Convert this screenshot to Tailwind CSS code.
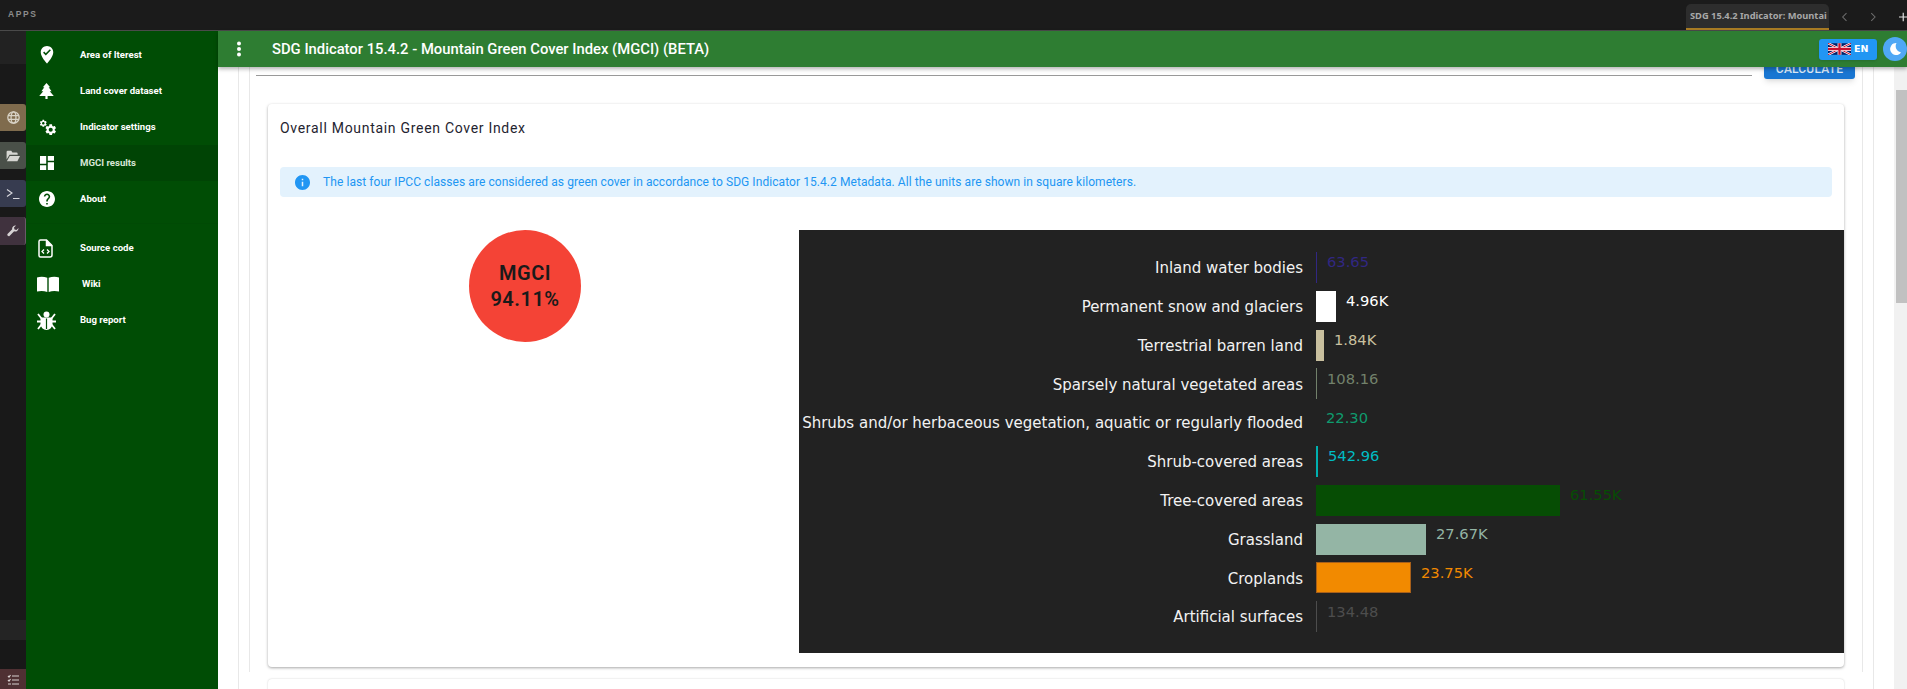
<!DOCTYPE html>
<html lang="en">
<head>
<meta charset="utf-8">
<title>SDG 15.4.2 Indicator: Mountain Green Cover Index</title>
<script src="https://cdn.jsdelivr.net/npm/@tailwindcss/browser@4"></script>
</head>
<body class="h-[689px] w-[1907px] overflow-hidden bg-white font-['Roboto',sans-serif]">
  <!-- Workspace top bar -->
  <div class="flex h-[31px] items-start justify-between border-b border-[#4a4a4a] bg-[#1b1b1b]">
    <span class="ml-[8px] mt-[9px] text-[8.5px] leading-[10px] font-bold tracking-[1.6px] text-[#8c8c8c] font-['Liberation_Sans',sans-serif]">APPS</span>
    <div class="flex h-full items-end">
      <div class="flex h-[26px] w-[143px] items-center rounded-t-[5px] border-b-2 border-[#a87c24] bg-[#2d2d2d] pl-[4px] pr-[7px]">
        <span class="whitespace-nowrap text-[9.3px] font-bold text-[#a8a8a8] font-['Noto_Sans',sans-serif]">SDG 15.4.2 Indicator: Mountai</span>
        <svg class="ml-auto" width="8" height="8" viewBox="0 0 8 8" fill="none" stroke="#c8c8c8" stroke-width="1.2"><path d="M1.5 1.5l5 5M6.5 1.5l-5 5"/></svg>
      </div>
      <div class="flex h-[26px] w-[78px] items-center pl-[12px]">
        <svg width="8" height="12" viewBox="0 0 8 12" fill="none" stroke="#6e6e6e" stroke-width="1.2"><path d="M6.5 1.5L2 6l4.5 4.5"/></svg>
        <svg class="ml-[22px]" width="8" height="12" viewBox="0 0 8 12" fill="none" stroke="#6e6e6e" stroke-width="1.2"><path d="M1.5 1.5L6 6l-4.5 4.5"/></svg>
        <svg class="ml-[22px]" width="10" height="10" viewBox="0 0 10 10" fill="none" stroke="#e0e0e0" stroke-width="1.4"><path d="M5 0v10M0 5h10"/></svg>
      </div>
    </div>
  </div>

  <div class="flex h-[658px]">
    <!-- Dock strip -->
    <div class="flex h-full w-[26px] shrink-0 flex-col bg-[#191919]">
      <div class="h-[33px] bg-[#222222]"></div>
      <div class="mt-[40px] flex h-[27px] items-center justify-center rounded-r-[3px] bg-[#7f6b4d]">
        <svg width="13" height="13" viewBox="0 0 24 24" fill="none" stroke="#d8d2c6" stroke-width="2.4"><circle cx="12" cy="12" r="10.5"/><ellipse cx="12" cy="12" rx="4.5" ry="10.5"/><path d="M2 8.5h20M2 15.5h20"/></svg>
      </div>
      <div class="mt-[11px] flex h-[27px] items-center justify-center rounded-r-[3px] bg-[#4a5049]">
        <svg width="14" height="12" viewBox="0 0 24 20" fill="#d6d6d2"><path d="M1 3a2 2 0 0 1 2-2h6l2 3h7a2 2 0 0 1 2 2v2H6L1 16V3z"/><path d="M6.5 10H24l-4.500 9H1.500z"/></svg>
      </div>
      <div class="mt-[11px] flex h-[27px] items-center justify-center rounded-r-[3px] bg-[#373c50]">
        <svg width="14" height="12" viewBox="0 0 14 12" fill="none" stroke="#d8d8de" stroke-width="1.1"><path d="M1 1.500L6 5 1 8.500M7 10.500h6.500"/></svg>
      </div>
      <div class="mt-[10px] flex h-[28px] items-center justify-center rounded-r-[3px] border-r border-[#6a5a68] bg-[#40323e]">
        <svg width="12" height="12" viewBox="0 0 24 24" fill="#d6d2d4"><path d="M23 6.500a6.500 6.500 0 0 1-8.700 6.100L5 22a3 3 0 0 1-4-4l9.400-9.300A6.500 6.500 0 0 1 18 1l-4 4 1 4 4 1 4-4z"/></svg>
      </div>
      <div class="mt-auto h-[20px] bg-[#242424]"></div>
      <div class="h-[29px] bg-[#181818]"></div>
      <div class="flex h-[20px] items-center justify-center bg-[#4f3033]">
        <svg width="12" height="11" viewBox="0 0 12 11" fill="none" stroke="#d8d0d0" stroke-width="1.200"><path d="M1 2l1 1 1.500-2M5 2h7M1 6l1 1 1.500-2M5 6h7M5 10h7M1 10h3"/></svg>
      </div>
    </div>

    <!-- Sidebar -->
    <nav class="flex h-full w-[192px] shrink-0 flex-col bg-[#004d05] pt-[6px] text-[9.600px] font-bold text-white">
      <a class="flex h-[36px] items-center"><span class="flex w-[54px] justify-center pr-[13px]">
        <svg width="14" height="18" viewBox="4 1 16 23" fill="#fff"><path d="M12 1C7.590 1 4 4.590 4 9c0 5.570 6.960 13.340 7.260 13.670l.74.820.740-.820C13.040 22.340 20 14.570 20 9c0-4.410-3.590-8-8-8zm-1.530 12l-3.480-3.480L8.400 8.110l2.070 2.070 5.130-5.130 1.410 1.410L10.470 13z"/></svg></span>Area of Iterest</a>
      <a class="flex h-[36px] items-center"><span class="flex w-[54px] justify-center pr-[13px]">
        <svg width="15" height="16" viewBox="2 1 20 22" fill="#fff"><path d="M12 1l5 6h-2l4 5.500h-2.500L22 19h-8.500v4h-3v-4H2l5.500-6.500H5L9 7H7z"/></svg></span>Land cover dataset</a>
      <a class="flex h-[36px] items-center"><span class="flex w-[54px] justify-center pr-[11px]">
        <svg width="18" height="17" viewBox="0 0 18 17" fill="#fff"><path transform="scale(.36)" d="M19.140 12.940c.040-.300.060-.610.060-.940 0-.320-.020-.640-.070-.940l2.030-1.580a.490.490 0 0 0 .120-.610l-1.920-3.320a.488.488 0 0 0-.590-.220l-2.390.960c-.500-.380-1.030-.700-1.620-.940l-.360-2.540a.484.484 0 0 0-.480-.410h-3.840c-.240 0-.430.170-.470.410l-.360 2.540c-.590.240-1.130.570-1.620.940l-2.390-.960c-.220-.080-.470 0-.590.220L2.740 8.870c-.120.210-.080.470.120.610l2.030 1.580c-.050.300-.090.630-.090.940s.020.640.070.940l-2.030 1.580a.490.490 0 0 0-.120.610l1.920 3.320c.120.220.370.290.590.220l2.390-.960c.500.380 1.030.700 1.620.940l.360 2.540c.050.240.240.410.480.410h3.840c.240 0 .440-.170.470-.410l.360-2.540c.590-.240 1.130-.560 1.620-.940l2.390.960c.220.080.470 0 .590-.220l1.920-3.320c.120-.220.070-.470-.120-.610l-2.010-1.580zM12 15.600c-1.980 0-3.600-1.620-3.600-3.600s1.620-3.600 3.600-3.600 3.600 1.620 3.600 3.600-1.620 3.600-3.600 3.600z"/><path transform="translate(5 4) scale(.56)" d="M19.140 12.940c.040-.300.060-.610.060-.940 0-.320-.020-.640-.070-.940l2.030-1.580a.490.490 0 0 0 .120-.610l-1.920-3.320a.488.488 0 0 0-.590-.220l-2.390.960c-.500-.380-1.030-.700-1.620-.940l-.360-2.540a.484.484 0 0 0-.480-.410h-3.840c-.240 0-.430.170-.470.410l-.360 2.540c-.590.240-1.130.570-1.620.940l-2.390-.960c-.220-.080-.470 0-.590.220L2.740 8.870c-.120.210-.080.470.120.610l2.030 1.580c-.050.300-.090.630-.090.940s.020.640.070.940l-2.030 1.580a.490.490 0 0 0-.120.610l1.920 3.320c.120.220.370.290.590.220l2.390-.960c.500.380 1.030.700 1.620.940l.360 2.540c.050.240.240.410.480.410h3.840c.240 0 .440-.170.470-.410l.360-2.540c.590-.240 1.130-.560 1.620-.940l2.390.960c.220.080.470 0 .590-.220l1.920-3.320c.120-.220.070-.470-.120-.610l-2.010-1.580zM12 15.600c-1.980 0-3.600-1.620-3.600-3.600s1.620-3.600 3.600-3.600 3.600 1.620 3.600 3.600-1.620 3.600-3.600 3.600z"/></svg></span>Indicator settings</a>
      <a class="flex h-[36px] items-center bg-[#004405] text-[#d8e6d8]"><span class="flex w-[54px] justify-center pr-[12px]">
        <svg width="14" height="14" viewBox="3 3 18 18" fill="#fff"><path d="M3 13h8V3H3v10zm0 8h8v-6H3v6zm10 0h8V11h-8v10zm0-18v6h8V3h-8z"/></svg></span>MGCI results</a>
      <a class="flex h-[36px] items-center"><span class="flex w-[54px] justify-center pr-[13px]">
        <svg width="16" height="16" viewBox="2 2 20 20" fill="#fff"><path d="M12 2C6.480 2 2 6.480 2 12s4.480 10 10 10 10-4.480 10-10S17.520 2 12 2zm1 17h-2v-2h2v2zm2.070-7.750l-.900.920C13.450 12.900 13 13.500 13 15h-2v-.500c0-1.100.450-2.100 1.170-2.830l1.240-1.260c.370-.360.590-.860.590-1.410 0-1.100-.900-2-2-2s-2 .900-2 2H8c0-2.210 1.790-4 4-4s4 1.790 4 4c0 .880-.360 1.680-.930 2.250z"/></svg></span>About</a>
      <div class="mt-[6px] mb-[6px] h-px bg-[#004a05]"></div>
      <a class="flex h-[36px] items-center"><span class="flex w-[54px] justify-center pr-[16px]">
        <svg width="15" height="19" viewBox="0 0 15 19" fill="none" stroke="#fff" stroke-width="1.500"><path d="M2.500 1h6l5.500 5.500v9.500a2 2 0 0 1-2 2h-9.500a1.500 1.500 0 0 1-1.500-1.500v-14a1.500 1.500 0 0 1 1.500-1.500z"/><path d="M8.500 1v5.500H14" fill="#fff"/><path d="M6 10.500L4 12.500l2 2M9 10.500l2 2-2 2" stroke-width="1.300"/></svg></span>Source code</a>
      <a class="flex h-[36px] items-center"><span class="flex w-[56px] justify-center pr-[12px]">
        <svg width="22" height="16" viewBox="0 0 22 16" fill="#fff"><path d="M0 1.500C3 .500 7 .500 10.300 1.800V16C7 14.800 3 14.800 0 15.600z"/><path d="M22 1.500C19 .500 15 .500 11.700 1.800V16C15 14.800 19 14.800 22 15.600z"/></svg></span>Wiki</a>
      <a class="flex h-[36px] items-center"><span class="flex w-[54px] justify-center pr-[13px]">
        <svg width="19" height="19" viewBox="0 0 19 19" fill="#fff"><circle cx="9.500" cy="3.500" r="3"/><path d="M4.500 6.500h10a1 1 0 0 1 1 1V13a6 6 0 0 1-12 0V7.500a1 1 0 0 1 1-1z"/><path d="M1 3l3.500 4.500M18 3l-3.500 4.500M0 10.500h4M19 10.500h-4M1 18l3.500-4.500M18 18l-3.500-4.500" stroke="#fff" stroke-width="1.800" fill="none"/><path d="M9.500 7.500v10.500" stroke="#004d05" stroke-width="1.200"/></svg></span>Bug report</a>
    </nav>

    <!-- App column -->
    <div class="flex h-full min-w-0 flex-1 flex-col">
      <header class="relative z-10 flex h-[36px] shrink-0 items-center bg-[#2e7d32] shadow-[0_2px_4px_rgba(0,0,0,0.3)]">
        <svg class="ml-[17px]" width="8" height="16" viewBox="0 0 8 16" fill="#fff"><circle cx="4" cy="2.500" r="2"/><circle cx="4" cy="8" r="2"/><circle cx="4" cy="13.500" r="2"/></svg>
        <h1 class="ml-[29px] text-[14.800px] font-medium text-white">SDG Indicator 15.4.2 - Mountain Green Cover Index (MGCI) (BETA)</h1>
        <button class="ml-auto flex h-[21px] w-[58px] items-center rounded-[3px] bg-[#2196f3] pl-[9px] shadow-sm">
          <svg width="23" height="12" viewBox="0 0 60 30"><rect width="60" height="30" fill="#012169"/><path d="M0 0l60 30M60 0L0 30" stroke="#fff" stroke-width="6"/><path d="M0 0l60 30M60 0L0 30" stroke="#c8102e" stroke-width="2.500"/><path d="M30 0v30M0 15h60" stroke="#fff" stroke-width="10"/><path d="M30 0v30M0 15h60" stroke="#c8102e" stroke-width="6"/></svg>
          <span class="ml-[3px] text-[9.500px] font-bold text-white font-['DejaVu_Sans',sans-serif]">EN</span>
        </button>
        <span class="ml-[6px] flex h-[24px] w-[24px] items-center justify-center rounded-full bg-[#4fa8f5]">
          <svg width="14" height="14" viewBox="0 0 14 14" fill="#fff"><path d="M8.500 1a6 6 0 1 0 4.500 9.500A6.500 6.500 0 0 1 8.500 1z"/></svg>
        </span>
      </header>

      <div class="flex min-h-0 flex-1">
        <!-- Scrolling content -->
        <main class="ml-[20px] mr-[20px] flex-1 overflow-hidden border-x border-[#e8e8e8] px-[10px]">
          <div class="h-full border-x border-[#e8e8e8] pl-[18px] pr-[18px]">
            <div class="-ml-[12px] -mr-[11px] -mt-[17px] flex items-start">
              <div class="mt-[24.500px] h-px flex-1 bg-[#999999]"></div>
              <button class="ml-[12px] h-[29px] w-[91px] rounded-[3px] bg-[#1976d2] pt-[9px] text-[12px] leading-[16px] font-medium tracking-[0.2px] text-[#dbe9f7] shadow-md">CALCULATE</button>
            </div>
            <section class="mt-[25px] h-[563px] w-[1576px] overflow-hidden rounded-[4px] bg-white shadow-[0_1px_3px_rgba(0,0,0,0.35)]">
              <h2 class="ml-[12px] mt-[14px] text-[14px] leading-[20px] font-normal tracking-[0.7px] text-[#1f2430]">Overall Mountain Green Cover Index</h2>
              <div class="mx-[12px] mt-[29px] flex h-[30px] items-center rounded-[4px] bg-[#e3f2fd] pl-[15px]">
                <svg width="15" height="15" viewBox="2 2 20 20" fill="#2196f3"><path d="M12 2C6.480 2 2 6.480 2 12s4.480 10 10 10 10-4.480 10-10S17.520 2 12 2zm1 15h-2v-6h2v6zm0-8h-2V7h2v2z"/></svg>
                <p class="ml-[13px] text-[12px] tracking-[0.07px] text-[#2196f3]">The last four IPCC classes are considered as green cover in accordance to SDG Indicator 15.4.2 Metadata. All the units are shown in square kilometers.</p>
              </div>
              <div class="mt-[33px] flex">
                <!-- MGCI badge -->
                <div class="flex w-[531px] shrink-0 justify-center pr-[17px]">
                  <div class="flex h-[112px] w-[112px] flex-col items-center justify-center rounded-full bg-[#f44336] text-[20px] leading-[26px] font-semibold tracking-[0.5px] text-[#1a1a1a]">
                    <span>MGCI</span><span>94.11%</span>
                  </div>
                </div>
                <!-- Land cover chart -->
                <div class="flex h-[423px] w-[1045px] flex-col gap-[7.800px] bg-[#222222] pt-[22px] font-['DejaVu_Sans',sans-serif] text-[15px]">
                  <div class="flex h-[31px] items-center"><span class="mt-[2px] w-[504px] whitespace-nowrap text-right text-[#f2f2f2]">Inland water bodies</span><span class="ml-[13px] h-full w-px bg-[#312783]"></span><span class="mb-[10px] ml-[10px] text-[14.700px] text-[#312783]">63.65</span></div>
                  <div class="flex h-[31px] items-center"><span class="mt-[2px] w-[504px] whitespace-nowrap text-right text-[#f2f2f2]">Permanent snow and glaciers</span><span class="ml-[13px] h-full w-[20px] bg-white"></span><span class="mb-[10px] ml-[10px] text-[14.700px] text-white">4.96K</span></div>
                  <div class="flex h-[31px] items-center"><span class="mt-[2px] w-[504px] whitespace-nowrap text-right text-[#f2f2f2]">Terrestrial barren land</span><span class="ml-[13px] h-full w-[8px] bg-[#c9c09f]"></span><span class="mb-[10px] ml-[10px] text-[14.700px] text-[#c9c09f]">1.84K</span></div>
                  <div class="flex h-[31px] items-center"><span class="mt-[2px] w-[504px] whitespace-nowrap text-right text-[#f2f2f2]">Sparsely natural vegetated areas</span><span class="ml-[13px] h-full w-px bg-[#72816b]"></span><span class="mb-[10px] ml-[10px] text-[14.700px] text-[#72816b]">108.16</span></div>
                  <div class="flex h-[31px] items-center"><span class="mt-[2px] w-[504px] whitespace-nowrap text-right text-[#f2f2f2]">Shrubs and/or herbaceous vegetation, aquatic or regularly flooded</span><span class="ml-[13px] h-full w-0"></span><span class="mb-[10px] ml-[10px] text-[14.700px] text-[#0f9b6e]">22.30</span></div>
                  <div class="flex h-[31px] items-center"><span class="mt-[2px] w-[504px] whitespace-nowrap text-right text-[#f2f2f2]">Shrub-covered areas</span><span class="ml-[13px] h-full w-[2px] bg-[#00b0b0]"></span><span class="mb-[10px] ml-[10px] text-[14.700px] text-[#00bcc4]">542.96</span></div>
                  <div class="flex h-[31px] items-center"><span class="mt-[2px] w-[504px] whitespace-nowrap text-right text-[#f2f2f2]">Tree-covered areas</span><span class="ml-[13px] h-full w-[244px] bg-[#064d04]"></span><span class="mb-[10px] ml-[10px] text-[14.700px] text-[#064d04]">61.55K</span></div>
                  <div class="flex h-[31px] items-center"><span class="mt-[2px] w-[504px] whitespace-nowrap text-right text-[#f2f2f2]">Grassland</span><span class="ml-[13px] h-full w-[110px] bg-[#94b5a5]"></span><span class="mb-[10px] ml-[10px] text-[14.700px] text-[#94b5a5]">27.67K</span></div>
                  <div class="flex h-[31px] items-center"><span class="mt-[2px] w-[504px] whitespace-nowrap text-right text-[#f2f2f2]">Croplands</span><span class="ml-[13px] h-full w-[95px] border border-[#a8601a] bg-[#f28a00]"></span><span class="mb-[10px] ml-[10px] text-[14.700px] text-[#f28a00]">23.75K</span></div>
                  <div class="flex h-[31px] items-center"><span class="mt-[2px] w-[504px] whitespace-nowrap text-right text-[#f2f2f2]">Artificial surfaces</span><span class="ml-[13px] h-full w-px bg-[#4d4d4d]"></span><span class="mb-[10px] ml-[10px] text-[14.700px] text-[#4d4d4d]">134.48</span></div>
                </div>
              </div>
            </section>
            <section class="mt-[12px] h-[40px] w-[1576px] rounded-[4px] bg-white shadow-[0_0_2px_rgba(0,0,0,0.2)]"></section>
          </div>
        </main>
        <!-- Scrollbar -->
        <div class="w-[13px] shrink-0 bg-[#f1f1f1] pl-[2px] pt-[23px]">
          <div class="h-[213px] bg-[#c1c1c1]"></div>
        </div>
      </div>
    </div>
  </div>
</body>
</html>
